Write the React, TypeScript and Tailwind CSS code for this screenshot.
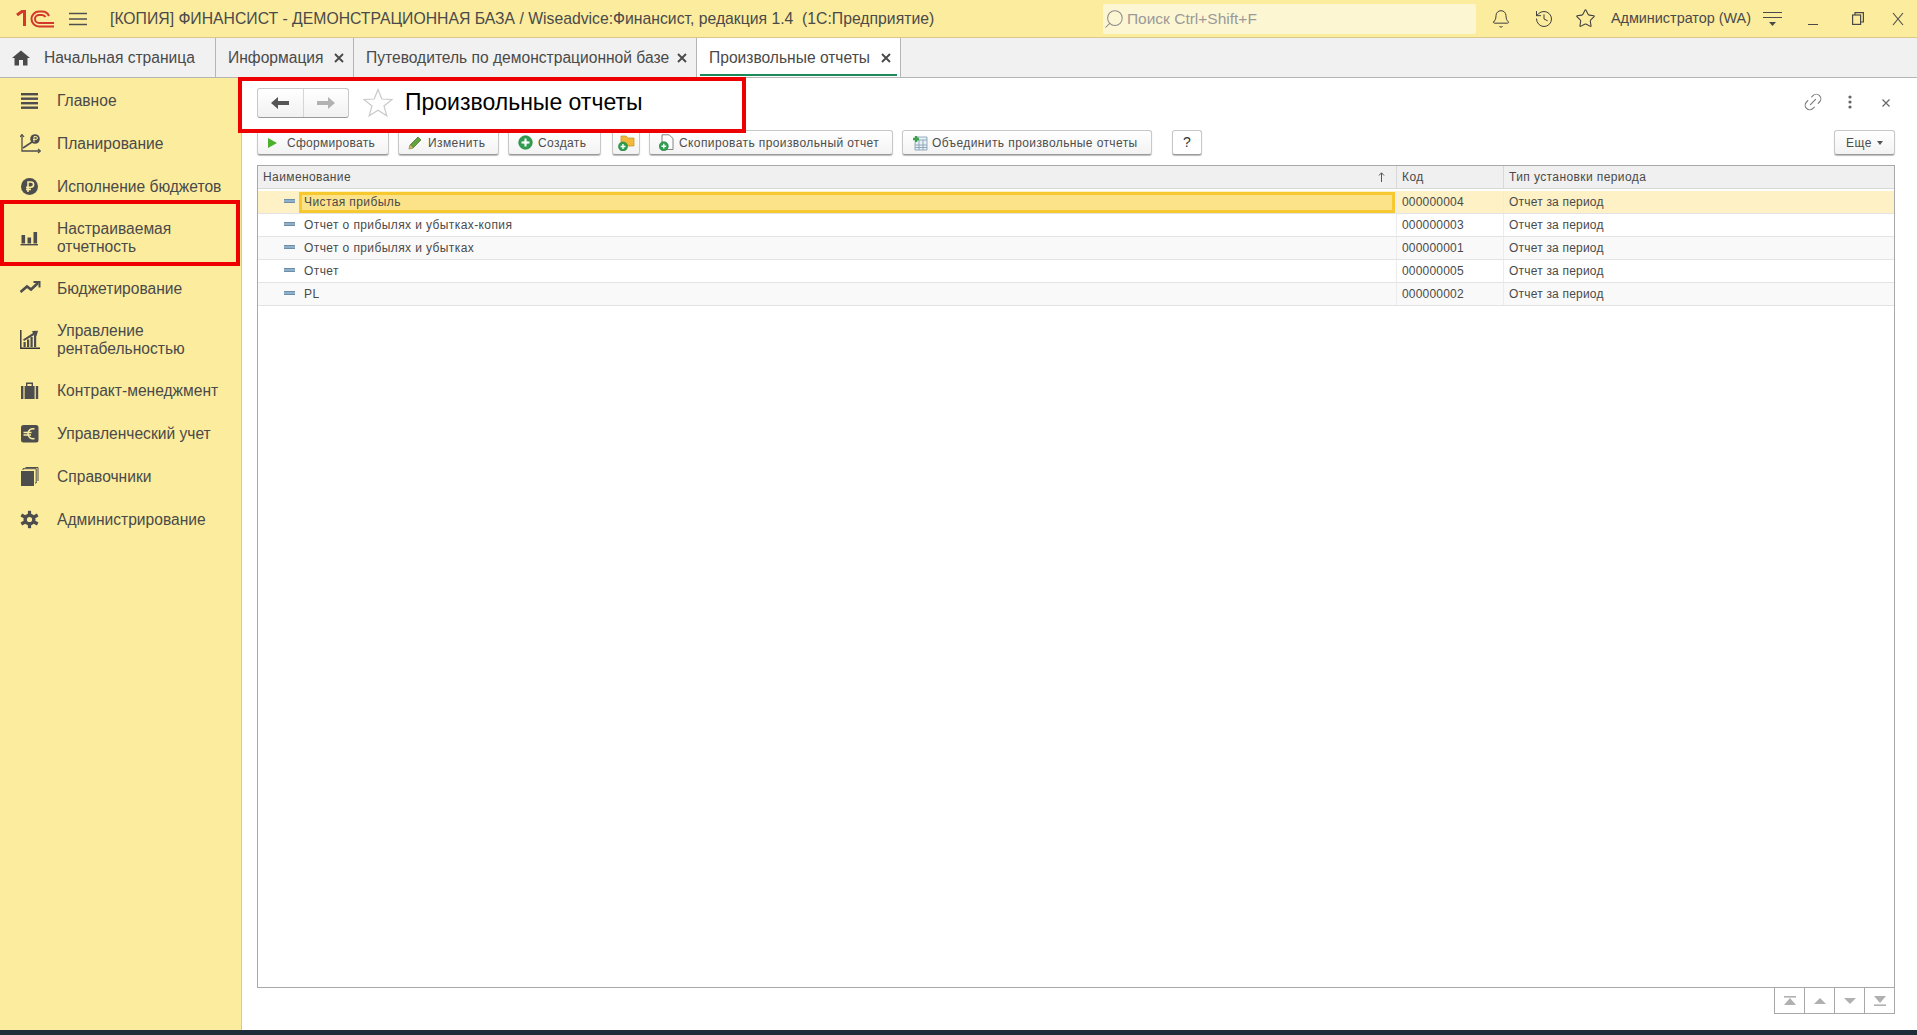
import React from "react";
import { Bell, History, Star, Search, Link2 } from "lucide-react";

const ic = "#4d4d4d";

function Logo() {
  return (
    <svg width="40" height="20" viewBox="0 0 40 20" fill="none" stroke="#d2382b">
      <path d="M1 6 L6 2.5 H8.5 V17" strokeWidth="3" />
      <path d="M38 17.5 H23 A7.5 7.5 0 0 1 23 2.5 H26 A7.5 7.5 0 0 1 33 7" strokeWidth="2" />
      <path d="M38 14 H23 A4 4 0 0 1 23 6 H26 A4 4 0 0 1 29.5 8" strokeWidth="2" />
    </svg>
  );
}

const navIcons: Record<string, React.ReactNode> = {
  main: (
    <g fill={ic}>
      <rect x="1" y="2" width="17" height="2.4" />
      <rect x="1" y="6.5" width="17" height="2.4" />
      <rect x="1" y="11" width="17" height="2.4" />
      <rect x="1" y="15.5" width="17" height="2.4" />
    </g>
  ),
  plan: (
    <g>
      <path d="M2 1 V17 H20" stroke={ic} strokeWidth="1.3" fill="none" />
      <path d="M0 3 L2 0.5 L4 3 M18 15 L20.5 17 L18 19" stroke={ic} strokeWidth="1.2" fill="none" />
      <path d="M3 14 L12 8" stroke={ic} strokeWidth="1.6" />
      <circle cx="15" cy="5" r="4.8" fill={ic} />
      <path d="M14 8 V2.6 H16 A1.4 1.4 0 0 1 16 5.4 H13" stroke="#fbed9f" strokeWidth="1" fill="none" />
    </g>
  ),
  exec: (
    <g>
      <circle cx="9.5" cy="9.5" r="8.5" fill={ic} />
      <path d="M8 15 V5 H11 A2.6 2.6 0 0 1 11 10.2 H6 M6 12.4 H11" stroke="#fbed9f" strokeWidth="1.6" fill="none" />
    </g>
  ),
  custom: (
    <g fill={ic}>
      <rect x="1.5" y="7" width="3.6" height="8.5" />
      <rect x="7.5" y="9.5" width="3.6" height="6" />
      <rect x="13.5" y="4" width="3.6" height="11.5" />
      <rect x="0.5" y="16" width="17.5" height="1.4" />
    </g>
  ),
  budget: (
    <g fill="none" stroke={ic} strokeWidth="2.6">
      <path d="M0.5 13 L7 7.5 L11 10.5 L18 4" />
      <path d="M13.5 3 H19.5 V8.5" strokeWidth="2" />
    </g>
  ),
  profit: (
    <g>
      <path d="M0.8 0 V18.2 H20" stroke="#333" strokeWidth="1.4" fill="none" />
      <g fill={ic}>
        <rect x="3.5" y="12" width="2.2" height="5" />
        <rect x="7" y="9.5" width="2.2" height="7.5" />
        <rect x="10.5" y="7" width="2.2" height="10" />
        <rect x="14" y="4.5" width="2.2" height="12.5" />
        <path d="M3 9.5 L13 3 L12 1 L18 0.8 L16.5 6 L15 4.5 L4 11 Z" />
      </g>
    </g>
  ),
  contract: (
    <g fill={ic}>
      <rect x="1" y="5" width="2.4" height="13" />
      <rect x="4.6" y="5" width="10" height="13" />
      <rect x="15.8" y="5" width="2.4" height="13" />
      <path d="M6 5 V1.5 H13 V5 H11.6 V3 H7.4 V5 Z" />
    </g>
  ),
  acct: (
    <g>
      <rect x="1" y="1" width="17.5" height="17.5" rx="2.5" fill={ic} />
      <path d="M14.5 5 A5 5 0 1 0 14.5 14.5 M3.5 8.5 H11.5 M3.5 11 H11" stroke="#fbed9f" strokeWidth="1.5" fill="none" />
    </g>
  ),
  refs: (
    <g>
      <rect x="1" y="4" width="13" height="15" fill={ic} />
      <path d="M3 3 V1.7 H16.2 V16 H15 M5.5 0.5 H18 V14" stroke={ic} strokeWidth="1" fill="none" />
    </g>
  ),
  admin: (
    <g>
      <g stroke={ic} strokeWidth="3.2">
        <path d="M9.5 0.8 V18.2" />
        <path d="M1.3 5 L17.7 14" />
        <path d="M1.3 14 L17.7 5" />
      </g>
      <circle cx="9.5" cy="9.5" r="6" fill={ic} />
      <circle cx="9.5" cy="9.5" r="2.6" fill="#fbed9f" />
    </g>
  ),
};

const navItems = [
  { icon: "main", lines: ["Главное"] },
  { icon: "plan", lines: ["Планирование"] },
  { icon: "exec", lines: ["Исполнение бюджетов"] },
  { icon: "custom", lines: ["Настраиваемая", "отчетность"] },
  { icon: "budget", lines: ["Бюджетирование"] },
  { icon: "profit", lines: ["Управление", "рентабельностью"] },
  { icon: "contract", lines: ["Контракт-менеджмент"] },
  { icon: "acct", lines: ["Управленческий учет"] },
  { icon: "refs", lines: ["Справочники"] },
  { icon: "admin", lines: ["Администрирование"] },
];

function Tab({ label, w, active, home }: { label: string; w: string; active?: boolean; home?: boolean }) {
  return (
    <div className={`relative flex h-full shrink-0 items-center border-r border-[#b5b5b5] ${w} ${active ? "bg-white" : ""}`}>
      {home ? (
        <svg className="ml-[12px] mr-[14px]" width="18" height="16" viewBox="0 0 18 16" fill="#4a4a4a">
          <path d="M9 0.5 L18 8 H15.5 V15.5 H11 V10 H7 V15.5 H2.5 V8 H0 Z" />
        </svg>
      ) : (
        <span className="w-[12px] shrink-0" />
      )}
      <span className="whitespace-nowrap text-[15.6px] leading-none text-[#4a4a4a]">{label}</span>
      {!home && (
        <svg className="ml-auto mr-[9px]" width="10" height="10" viewBox="0 0 10 10" stroke="#4a4a4a" strokeWidth="1.9">
          <path d="M1 1 L9 9 M9 1 L1 9" />
        </svg>
      )}
      {active && <div className="absolute bottom-[1px] left-[3px] right-[3px] h-[2px] bg-[#1d8a5c]" />}
    </div>
  );
}

function ToolBtn({ w, label, icon, tight, gap }: { w: string; label?: string; icon?: React.ReactNode; tight?: boolean; gap?: string }) {
  return (
    <button
      className={`flex h-[25px] shrink-0 items-center rounded-[3px] border border-[#c8c8c8] border-b-[#9a9a9a] bg-gradient-to-b from-white to-[#f3f3f3] shadow-[0_1px_1px_#bdbdbd] ${w} ${tight ? "justify-center" : "pl-[9px]"}`}
    >
      {icon}
      {label && <span className={`whitespace-nowrap text-[12px] leading-none text-[#4d4d4d] ${gap}`}>{label}</span>}
    </button>
  );
}

const plusBadge = (x: number, y: number, r = 4.5) => (
  <g>
    <circle cx={x} cy={y} r={r} fill="#2f9e4f" stroke="#1d7a3a" strokeWidth="0.6" />
    <path d={`M${x - 2.4} ${y} H${x + 2.4} M${x} ${y - 2.4} V${y + 2.4}`} stroke="#fff" strokeWidth="1.4" />
  </g>
);

const rows = [
  { name: "Чистая прибыль", code: "000000004", sel: true },
  { name: "Отчет о прибылях и убытках-копия", code: "000000003" },
  { name: "Отчет о прибылях и убытках", code: "000000001", alt: true },
  { name: "Отчет", code: "000000005" },
  { name: "PL", code: "000000002", alt: true },
];

function Row({ name, code, sel, alt }: { name: string; code: string; sel?: boolean; alt?: boolean }) {
  const bg = sel ? "bg-[#fdf1c5]" : alt ? "bg-[#f9f9f9]" : "bg-white";
  return (
    <div className={`flex h-[23px] border-b border-[#e3e3e3] text-[12px] leading-none tracking-[0.4px] text-[#4a4a4a] ${bg}`}>
      <div className="flex w-[1138px] shrink-0 items-center">
        <span className="ml-[26px] mb-[2px] h-[4px] w-[11px] shrink-0 border-y border-[#6f8fa8] bg-[#8fb0c8]" />
        {sel ? (
          <div className="ml-[4px] flex h-[21px] flex-1 items-center border-[3px] border-[#f5c92f] bg-[#fce389] pl-[2px] mr-[1px]">{name}</div>
        ) : (
          <div className="ml-[9px]">{name}</div>
        )}
      </div>
      <div className="flex w-[107px] shrink-0 items-center border-l border-[#ececec] pl-[5px] tracking-[0.2px]">{code}</div>
      <div className="flex flex-1 items-center border-l border-[#ececec] pl-[5px] tracking-[0.2px]">Отчет за период</div>
    </div>
  );
}

function Pager({ d }: { d: React.ReactNode }) {
  return (
    <div className="flex h-[26px] w-[30px] items-center justify-center border-b border-r border-[#a8a8a8]">
      <svg width="14" height="10" viewBox="0 0 14 10" fill="#b0b0b0">{d}</svg>
    </div>
  );
}

export default function App() {
  return (
    <div className="relative flex h-[1035px] w-full flex-col overflow-hidden bg-white font-['Liberation_Sans',Arial,sans-serif]">
      {/* title bar */}
      <div className="flex h-[38px] shrink-0 items-center border-b border-[#d8c98a] bg-[#fcec9e]">
        <div className="ml-[16px]"><Logo /></div>
        <svg className="ml-[13px]" width="18" height="14" viewBox="0 0 18 14" stroke="#4f4f4f" strokeWidth="1.3">
          <path d="M0 1.5 H18 M0 7 H18 M0 12.5 H18" />
        </svg>
        <div className="ml-[23px] whitespace-nowrap text-[15.75px] leading-none text-[#4a4a4a]">
          [КОПИЯ] ФИНАНСИСТ - ДЕМОНСТРАЦИОННАЯ БАЗА / Wiseadvice:Финансист, редакция 1.4&nbsp; (1С:Предприятие)
        </div>
        <div className="ml-auto flex h-[30px] w-[373px] items-center rounded-[2px] bg-[#fdf6d2]">
          <Search size={22} strokeWidth={1.1} className="-scale-x-100 text-[#8a8a8a]" />
          <span className="ml-[2px] text-[15.5px] leading-none text-[#9a9a9a]">Поиск Ctrl+Shift+F</span>
        </div>
        <Bell size={20} strokeWidth={1.2} className="ml-[15px] text-[#3f3f3f]" />
        <History size={20} strokeWidth={1.2} className="ml-[23px] text-[#3f3f3f]" />
        <Star size={21} strokeWidth={1.2} className="ml-[21px] text-[#3f3f3f]" />
        <span className="ml-[15px] whitespace-nowrap text-[14.4px] leading-none text-[#4a4a4a]">Администратор (WA)</span>
        <svg className="ml-[12px]" width="19" height="16" viewBox="0 0 19 16" stroke="#4a4a4a" strokeWidth="1.2">
          <path d="M0 1.5 H19 M0 6.5 H19" />
          <path d="M6 11 H13 L9.5 15 Z" fill="#4a4a4a" stroke="none" />
        </svg>
        <span className="ml-[26px] mt-[12px] h-[1px] w-[10px] bg-[#4a4a4a]" />
        <svg className="ml-[34px]" width="12" height="13" viewBox="0 0 12 13" fill="none" stroke="#4a4a4a" strokeWidth="1.2">
          <rect x="0.6" y="3" width="8" height="9.4" />
          <path d="M3 3 V0.6 H11.4 V10 H8.6" />
        </svg>
        <svg className="ml-[28px] mr-[13px]" width="12" height="14" viewBox="0 0 12 14" stroke="#4a4a4a" strokeWidth="1.1">
          <path d="M1 1 L11 13 M11 1 L1 13" />
        </svg>
      </div>

      {/* tabs */}
      <div className="flex h-[40px] shrink-0 border-b border-[#b5b5b5] bg-[#f1f1f1]">
        <Tab home label="Начальная страница" w="w-[216px]" />
        <Tab label="Информация" w="w-[138px]" />
        <Tab label="Путеводитель по демонстрационной базе" w="w-[343px]" />
        <Tab active label="Произвольные отчеты" w="w-[204px]" />
      </div>

      <div className="flex min-h-0 flex-1">
        {/* sidebar */}
        <aside className="w-[242px] shrink-0 border-r border-[#d6cb96] bg-[#fcec9e] pt-[1px]">
          {navItems.map((n) => (
            <div key={n.icon} className={`flex items-center ${n.lines.length > 1 ? "h-[59px]" : "h-[43px]"}`}>
              <svg className="ml-[20px] shrink-0" width="21" height="20" viewBox="0 0 21 20">{navIcons[n.icon]}</svg>
              <div className="ml-[16px] text-[15.6px] leading-[18px] text-[#4a4a4a]">
                {n.lines.map((l) => (
                  <div key={l} className="whitespace-nowrap">{l}</div>
                ))}
              </div>
            </div>
          ))}
        </aside>

        {/* main */}
        <main className="flex min-w-0 flex-1 flex-col pl-[15px] pr-[22px]">
          <div className="flex h-[52px] shrink-0 items-center pb-[3px]">
            <div className="flex h-[30px] w-[92px] overflow-hidden rounded-[3px] border border-[#c8c8c8] border-b-[#9a9a9a] bg-gradient-to-b from-white to-[#f1f1f1]">
              <div className="flex flex-1 items-center justify-center border-r border-[#d5d5d5]">
                <svg width="18" height="12" viewBox="0 0 18 12" fill="#555"><path d="M0 6 L7 0 V4 H18 V8 H7 V12 Z" /></svg>
              </div>
              <div className="flex flex-1 items-center justify-center">
                <svg width="18" height="12" viewBox="0 0 18 12" fill="#b2b2b2"><path d="M18 6 L11 0 V4 H0 V8 H11 V12 Z" /></svg>
              </div>
            </div>
            <svg className="ml-[14px]" width="30" height="29" viewBox="0 0 30 29" fill="none" stroke="#c9c9c9" strokeWidth="1.2">
              <path d="M15 1.5 L18.8 11 L29 11.5 L21 18 L23.8 27.8 L15 22.3 L6.2 27.8 L9 18 L1 11.5 L11.2 11 Z" />
            </svg>
            <h1 className="ml-[12px] whitespace-nowrap text-[23px] font-normal leading-none text-black">Произвольные отчеты</h1>
            <div className="ml-auto flex items-center">
              <Link2 size={22} strokeWidth={1.2} className="-mt-[2px] -rotate-45 text-[#777]" />
              <svg className="ml-[24px] -mt-[1px]" width="4" height="14" viewBox="0 0 4 14" fill="#666">
                <circle cx="2" cy="2" r="1.6" /><circle cx="2" cy="7" r="1.6" /><circle cx="2" cy="12" r="1.6" />
              </svg>
              <svg className="ml-[30px] mr-[5px]" width="8" height="8" viewBox="0 0 8 8" stroke="#666" strokeWidth="1.2">
                <path d="M0.5 0.5 L7.5 7.5 M7.5 0.5 L0.5 7.5" />
              </svg>
            </div>
          </div>

          {/* toolbar */}
          <div className="flex h-[25px] shrink-0 items-center">
            <ToolBtn w="w-[132px]" gap="ml-[9px] tracking-[0.28px]" label="Сформировать" icon={<svg width="11" height="12" viewBox="0 0 11 12" fill="#4caf2d"><path d="M1 1 L10 6 L1 11 Z" /></svg>} />
            <div className="w-[9px] shrink-0" />
            <ToolBtn
              w="w-[101px]"
              gap="ml-[6px] tracking-[0.4px]"
              label="Изменить"
              icon={
                <svg width="14" height="14" viewBox="0 0 14 14">
                  <path d="M1 13 L2 9 L10 1 L13 4 L5 12 Z" fill="#63a33e" stroke="#3f6e28" strokeWidth="0.7" />
                  <path d="M1 13 L2 9 L5 12 Z" fill="#e7b26d" />
                </svg>
              }
            />
            <div className="w-[9px] shrink-0" />
            <ToolBtn w="w-[93px]" gap="ml-[5px] tracking-[0.4px]" label="Создать" icon={<svg width="15" height="15" viewBox="0 0 15 15">{plusBadge(7.5, 7.5, 6.8)}<path d="M3.5 7.5 H11.5 M7.5 3.5 V11.5" stroke="#fff" strokeWidth="2" /></svg>} />
            <div className="w-[11px] shrink-0" />
            <ToolBtn
              tight
              w="w-[28px]"
              icon={
                <svg width="17" height="17" viewBox="0 0 17 17">
                  <path d="M3 2 H8 L10 4 H16 V12 H3 Z" fill="#f2b93b" stroke="#c98f1e" strokeWidth="0.7" />
                  {plusBadge(5, 12.5)}
                </svg>
              }
            />
            <div className="w-[9px] shrink-0" />
            <ToolBtn
              w="w-[244px]"
              gap="ml-[5px] tracking-[0.4px]"
              label="Скопировать произвольный отчет"
              icon={
                <svg width="15" height="17" viewBox="0 0 15 17" className="shrink-0">
                  <path d="M3 0.8 H10 L14 4.5 V15.5 H3 Z" fill="#fff" stroke="#777" strokeWidth="0.9" />
                  {plusBadge(4.8, 12.2)}
                </svg>
              }
            />
            <div className="w-[9px] shrink-0" />
            <ToolBtn
              w="w-[250px]"
              gap="ml-[4px] tracking-[0.4px]"
              label="Объединить произвольные отчеты"
              icon={
                <svg width="16" height="16" viewBox="0 0 16 16" className="shrink-0">
                  <path d="M5 2 H15 V15 H3 V8 Z" fill="#e8eff5" stroke="#7f9ab0" strokeWidth="0.8" />
                  <path d="M3 10 H15 M3 12.5 H15 M7 5 V15 M11 5 V15 M5 5 H15" stroke="#7f9ab0" strokeWidth="0.8" />
                  <path d="M1 4 H7 M4 1 V7" stroke="#3ca24f" strokeWidth="2.4" />
                </svg>
              }
            />
            <div className="w-[20px] shrink-0" />
            <button className="flex h-[25px] w-[30px] shrink-0 items-center justify-center rounded-[3px] border border-[#c8c8c8] border-b-[#9a9a9a] bg-white text-[14px] font-normal text-[#333] shadow-[0_1px_1px_#bdbdbd]">?</button>
            <button className="ml-auto flex h-[25px] w-[61px] shrink-0 items-center justify-center rounded-[3px] border border-[#c8c8c8] border-b-[#9a9a9a] bg-gradient-to-b from-white to-[#f3f3f3] shadow-[0_1px_1px_#bdbdbd]">
              <span className="text-[12px] leading-none tracking-[0.5px] text-[#4d4d4d]">Еще</span>
              <svg className="ml-[5px]" width="6" height="4" viewBox="0 0 6 4" fill="#555"><path d="M0 0 H6 L3 4 Z" /></svg>
            </button>
          </div>

          {/* table */}
          <div className="mt-[10px] flex h-[823px] shrink-0 flex-col border border-[#a8a8a8]">
            <div className="flex h-[23px] shrink-0 border-b border-[#d8d8d8] bg-[#f0f0f0] text-[12px] leading-none tracking-[0.4px] text-[#4a4a4a]">
              <div className="flex w-[1138px] shrink-0 items-center justify-between pl-[5px] pr-[11px]">
                <span>Наименование</span>
                <svg width="7" height="10" viewBox="0 0 7 10" fill="none" stroke="#555" strokeWidth="1">
                  <path d="M3.5 10 V1 M1 3.5 L3.5 0.8 L6 3.5" />
                </svg>
              </div>
              <div className="flex w-[107px] shrink-0 items-center border-l border-[#d8d8d8] pl-[5px]">Код</div>
              <div className="flex flex-1 items-center border-l border-[#d8d8d8] pl-[5px]">Тип установки периода</div>
            </div>
            <div className="h-[2px] shrink-0" />
            {rows.map((r) => (
              <Row key={r.code} {...r} />
            ))}
          </div>

          {/* pager */}
          <div className="flex shrink-0 justify-end">
            <div className="flex border-l border-[#a8a8a8]">
              <Pager d={<><rect x="1" y="0" width="12" height="1.6" /><path d="M7 2 L13 9 H1 Z" /></>} />
              <Pager d={<path d="M7 2 L13 8 H1 Z" />} />
              <Pager d={<path d="M1 2 H13 L7 8 Z" />} />
              <Pager d={<><path d="M1 0 H13 L7 7 Z" /><rect x="1" y="8.4" width="12" height="1.6" /></>} />
            </div>
          </div>
        </main>
      </div>

      <div className="h-[5px] shrink-0 bg-[#1f2d38]" />

      {/* red annotation frames */}
      <div className="absolute left-[238px] top-[77px] h-[56px] w-[508px] border-4 border-[#ee0000]" />
      <div className="absolute left-0 top-[200px] h-[66px] w-[240px] border-4 border-[#ee0000]" />
    </div>
  );
}
